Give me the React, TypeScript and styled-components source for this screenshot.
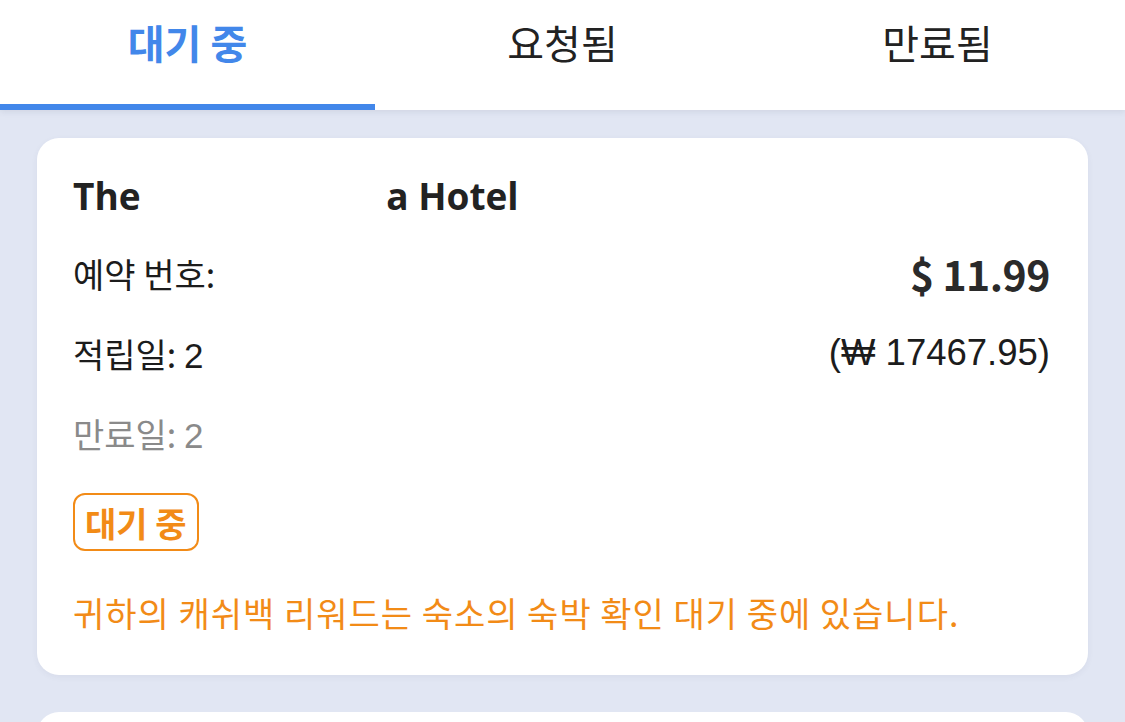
import React from "react";
import styled, { createGlobalStyle } from "styled-components";

const GlobalStyle = createGlobalStyle`
  html, body { margin: 0; padding: 0; background: #e1e6f3; }
  body { font-family: "Noto Sans CJK KR", "Noto Sans", sans-serif; overflow: hidden; }
  * { box-sizing: border-box; }
`;

const BLUE = "#4287ea";
const ORANGE = "#f28b17";

const Page = styled.div`
  width: 1125px;
  height: 722px;
  background: #e1e6f3;
  overflow: hidden;
`;

const TabBar = styled.div`
  position: relative;
  z-index: 1;
  display: grid;
  grid-template-columns: repeat(3, 1fr);
  height: 110px;
  background: #ffffff;
  box-shadow: 0 2px 6px rgba(60, 70, 100, 0.10);
`;

const Tab = styled.div<{ $active?: boolean }>`
  display: flex;
  align-items: flex-start;
  justify-content: center;
  padding-top: 15px;
  font-size: 40px;
  font-weight: ${(p) => (p.$active ? 700 : 400)};
  color: ${(p) => (p.$active ? BLUE : "#222222")};
  line-height: 54px;
  border-bottom: 6px solid ${(p) => (p.$active ? BLUE : "transparent")};
`;

const List = styled.div`
  display: flex;
  flex-direction: column;
  gap: 37px;
  padding: 28px 37px 0;
`;

const Card = styled.div`
  background: #ffffff;
  border-radius: 22px;
  padding: 32px 38px 42px 36px;
  display: flex;
  flex-direction: column;
  box-shadow: 0 2px 6px rgba(60, 70, 110, 0.06);
`;

const Title = styled.div`
  display: flex;
  align-items: center;
  font-family: "Open Sans", "Noto Sans CJK KR", sans-serif;
  font-weight: 700;
  font-size: 37px;
  line-height: 52px;
  color: #222222;
  margin-bottom: 11px;
  white-space: pre;
`;

const Redacted = styled.span<{ $w: number }>`
  display: inline-block;
  width: ${(p) => p.$w}px;
`;

const Row = styled.div`
  display: flex;
  align-items: center;
  justify-content: space-between;
  height: 80px;
`;

const Label = styled.span<{ $muted?: boolean }>`
  font-size: 34px;
  color: ${(p) => (p.$muted ? "#8a8a8a" : "#1c1c1c")};
  white-space: pre;
`;

const Digits = styled.span`
  font-family: "Liberation Sans", "Noto Sans CJK KR", sans-serif;
  font-size: 35px;
`;

const Price = styled.span`
  font-size: 41px;
  font-weight: 700;
  color: #2a2a2a;
  letter-spacing: -0.5px;
`;

const Won = styled.span`
  font-family: "Liberation Sans", "Noto Sans CJK KR", sans-serif;
  font-size: 36.5px;
  color: #1c1c1c;
`;

const Badge = styled.div`
  align-self: flex-start;
  margin-top: 20px;
  height: 58px;
  padding: 0 10px;
  display: flex;
  align-items: center;
  border: 2.5px solid ${ORANGE};
  border-radius: 12px;
  color: ${ORANGE};
  font-size: 34px;
  font-weight: 700;
`;

const Message = styled.div`
  margin-top: 42px;
  font-size: 34px;
  letter-spacing: 1px;
  line-height: 40px;
  color: ${ORANGE};
  white-space: nowrap;
`;

const PeekCard = styled.div`
  background: #ffffff;
  border-radius: 22px;
  height: 200px;
`;

export default function App() {
  return (
    <Page>
      <GlobalStyle />
      <TabBar>
        <Tab $active>대기 중</Tab>
        <Tab>요청됨</Tab>
        <Tab>만료됨</Tab>
      </TabBar>
      <List>
        <Card>
          <Title>
            {"The "}
            <Redacted $w={236} />
            {"a Hotel"}
          </Title>
          <Row>
            <Label>{"예약 번호:  "}</Label>
            <Price>$ 11.99</Price>
          </Row>
          <Row>
            <Label>
              {"적립일: "}
              <Digits>2</Digits>
            </Label>
            <Won>(₩ 17467.95)</Won>
          </Row>
          <Row>
            <Label $muted>
              {"만료일: "}
              <Digits>2</Digits>
            </Label>
          </Row>
          <Badge>대기 중</Badge>
          <Message>귀하의 캐쉬백 리워드는 숙소의 숙박 확인 대기 중에 있습니다.</Message>
        </Card>
        <PeekCard />
      </List>
    </Page>
  );
}
